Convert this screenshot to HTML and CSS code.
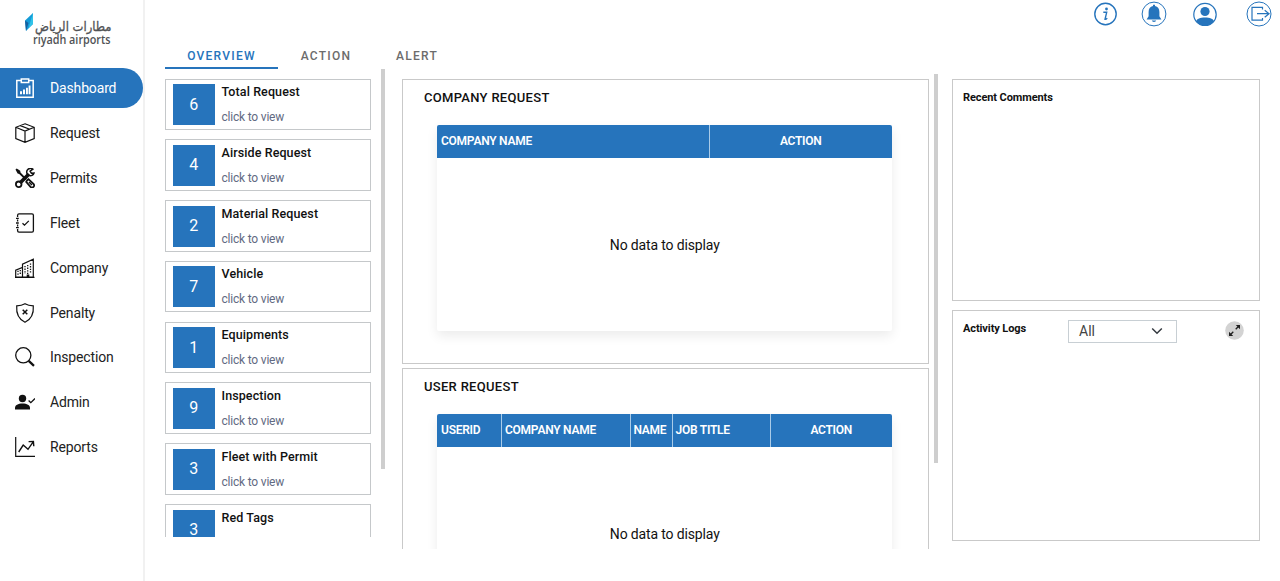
FILE: index.html
```html
<!DOCTYPE html>
<html lang="en">
<head>
<meta charset="utf-8">
<title>Riyadh Airports Dashboard</title>
<link rel="stylesheet" href="styles.css">
</head>
<body>
<div class="app">
  <aside class="sidebar">
    <div class="logo">
      <svg class="logo-mark" width="9" height="19" viewBox="0 0 9 19"><path d="M0 7.500 8 0v11L1 18z" fill="#159bd7"/><path d="M8 0v11L3.500 15z" fill="#31c3e8"/><path d="M0 7.500 3.500 10 1 18z" fill="#17609f"/></svg>
      <div class="logo-words">
        <span class="logo-ar" lang="ar" dir="rtl">مطارات الرياض</span>
        <span class="logo-en">riyadh airports</span>
      </div>
    </div>
    <nav class="nav">
      <a class="nav-item active"><svg class="ico" viewBox="0 0 20 20"><path d="M6 2.500H1.800v16.700h16.400V2.500H14M6.300 1h7.400v3.600H6.300z" stroke-width="1.500"/><path d="M5 13.200h2v3H5zM8 11.500h2v4.700H8zM11 9.800h1.900v6.400H11zM13.600 7.500h1.900v8.700h-1.900z" class="solid"/></svg><span>Dashboard</span></a>
      <a class="nav-item"><svg class="ico" viewBox="0 0 20 20"><path d="M10 .8 19.200 4.300v11.200L10 19.300.8 15.500V4.300zM.8 4.300 10 8l9.200-3.700M10 8v11.300M5.300 2.600l9.400 3.700"/></svg><span>Request</span></a>
      <a class="nav-item"><svg class="ico" viewBox="0 0 20 20"><path d="m5 15 9-9" stroke-width="3.800"/><path d="M17.800 1.200A3.700 3.700 0 1 0 19 5l-2.600.2-1.300-2z" stroke-width="1.500"/><circle cx="3.700" cy="16.300" r="2.800" stroke-width="1.800"/><path d="M.5 1.600 1.700.5l3.500 2.300.3 1.800 6.200 6.200-1.300 1.300-6.200-6.200-1.600-.4z" class="solid" /><path d="m12 12.500 1.500-1.300 5 4.700a2 2 0 0 1-3 3l-4.300-5z" stroke-width="1.800"/><path d="m14 14 3 3" stroke-width="1.500"/></svg><span>Permits</span></a>
      <a class="nav-item"><svg class="ico" viewBox="0 0 20 20"><path d="M2.600 4V2.200A1.400 1.400 0 0 1 4 .9h13a1.400 1.400 0 0 1 1.400 1.400v15.400A1.400 1.400 0 0 1 17 19.100H4a1.400 1.400 0 0 1-1.400-1.400V16M2.600 6.500v2M2.600 11.500v2M1 5.300h2.800M1 10h2.800M1 14.700h2.800M7.500 10.200l2 2 4.300-4.300" stroke-width="1.300"/></svg><span>Fleet</span></a>
      <a class="nav-item"><svg class="ico" viewBox="0 0 20 20"><path d="M.7 19.200v-7L7.500 9.500v9.700zM7.500 19.200V6.200l10.800-5v18zM0 19.300h19.500" stroke-width="1.200"/><path d="M10 8v8M12.700 7v9M15.500 5.500V16M3 12.800v4M5.300 12v5" stroke-dasharray="1.300 1.300" stroke-width="1.300"/><path d="M11.700 16.500h2.600v2.700h-2.600z" class="solid"/></svg><span>Company</span></a>
      <a class="nav-item"><svg class="ico" viewBox="0 0 20 20"><path d="M10 .8c2.700 1.600 5.400 2 8.300 2 .6 8-2 13.500-8.300 16.500C3.700 16.300 1.100 10.800 1.700 2.800c2.900 0 5.600-.4 8.300-2z"/><path d="m7.700 6.700 4.600 4.600m0-4.600-4.600 4.600" stroke-width="1.500"/></svg><span>Penalty</span></a>
      <a class="nav-item"><svg class="ico" viewBox="0 0 20 20"><circle cx="8.300" cy="8.300" r="7.600" stroke-width="1.300"/><path d="m13.700 13.900 5.300 4.900" stroke-width="2.300"/></svg><span>Inspection</span></a>
      <a class="nav-item"><svg class="ico" viewBox="0 0 20 20"><circle cx="7.500" cy="6.500" r="3.700" class="solid"/><path d="M0 17.600v-1.500c0-3 3-4.500 7.500-4.500s7.500 1.500 7.500 4.500v1.500z" class="solid"/><path d="m13.600 8.500 2.200 2.200L20 6.500" stroke-width="1.300"/></svg><span>Admin</span></a>
      <a class="nav-item"><svg class="ico" viewBox="0 0 20 20"><path d="M.7 0v19.300H20"/><path d="m3.700 15 4.500-7 4.800 4.300 5.200-7.500M13.600 4.600l4.800-.2.400 4.900" stroke-width="1.400"/></svg><span>Reports</span></a>
    </nav>
  </aside>

  <main class="main">
    <header class="topbar">
      <svg width="23" height="24" viewBox="0 0 23 24" class="top-ico"><circle cx="11.500" cy="12" r="10.700" stroke-width="1.400"/><circle cx="12.500" cy="7" r="1.400" class="solid"/><path d="M9.300 10.300h3.400l-1.700 7c.8.200 1.500-.3 2.200-1.200" stroke-width="1.400"/></svg>
      <svg width="26" height="26" viewBox="0 0 26 26" class="top-ico"><circle cx="13" cy="13" r="11.900" stroke-width="1"/><path d="M12 3.700h2v1.200c3 .6 4.400 2.700 4.400 6v4.400l2 3.200H5.600l2-3.200v-4.400c0-3.300 1.400-5.400 4.400-6zM10.800 19.600h4.400c-.2 1.800-4.200 1.800-4.400 0z" class="solid"/></svg>
      <svg width="24" height="24" viewBox="0 0 24 24" class="top-ico"><circle cx="12" cy="12.500" r="11.200" stroke-width="1.200"/><circle cx="12" cy="9.500" r="4.600" class="solid"/><path d="M3 19.500c1-3 4-4 9-4s8 1 9 4c-4.500 5.300-13.500 5.300-18 0z" class="solid"/></svg>
      <svg width="26" height="26" viewBox="0 0 26 26" class="top-ico"><circle cx="13" cy="13" r="12" stroke-width="1"/><path d="M16.500 8.500V6.300H6v12.900h10.500V17M11 12.700h12.500M18.700 9.200l4.300 3.500-4.300 3.500" stroke-width="1.200"/></svg>
    </header>

    <div class="tabs">
      <button class="tab selected">OVERVIEW</button>
      <button class="tab">ACTION</button>
      <button class="tab">ALERT</button>
    </div>

    <div class="content">
      <section class="stats">
        <div class="stat-list">
          <article class="stat"><b class="count">6</b><div class="stat-text"><h3>Total Request</h3><a>click to view</a></div></article>
          <article class="stat"><b class="count">4</b><div class="stat-text"><h3>Airside Request</h3><a>click to view</a></div></article>
          <article class="stat"><b class="count">2</b><div class="stat-text"><h3>Material Request</h3><a>click to view</a></div></article>
          <article class="stat"><b class="count">7</b><div class="stat-text"><h3>Vehicle</h3><a>click to view</a></div></article>
          <article class="stat"><b class="count">1</b><div class="stat-text"><h3>Equipments</h3><a>click to view</a></div></article>
          <article class="stat"><b class="count">9</b><div class="stat-text"><h3>Inspection</h3><a>click to view</a></div></article>
          <article class="stat"><b class="count">3</b><div class="stat-text"><h3>Fleet with Permit</h3><a>click to view</a></div></article>
          <article class="stat"><b class="count">3</b><div class="stat-text"><h3>Red Tags</h3></div></article>
        </div>
        <div class="thumb thumb-stats"></div>
      </section>

      <section class="requests">
        <div class="request-list">
          <article class="panel">
            <h2>COMPANY REQUEST</h2>
            <div class="grid">
              <div class="grid-head company-cols"><span>COMPANY NAME</span><span class="mid">ACTION</span></div>
              <div class="grid-empty">No data to display</div>
            </div>
          </article>
          <article class="panel">
            <h2>USER REQUEST</h2>
            <div class="grid">
              <div class="grid-head user-cols"><span>USERID</span><span>COMPANY NAME</span><span>NAME</span><span>JOB TITLE</span><span class="mid">ACTION</span></div>
              <div class="grid-empty">No data to display</div>
            </div>
          </article>
        </div>
        <div class="thumb thumb-requests"></div>
      </section>

      <section class="side">
        <article class="box comments"><h4>Recent Comments</h4></article>
        <article class="box logs">
          <h4>Activity Logs</h4>
          <div class="select"><span>All</span><svg width="12" height="8" viewBox="0 0 12 8"><path d="m1.200 1.500 4.800 4.700 4.800-4.700" fill="none" stroke="#343a40" stroke-width="1.500"/></svg></div>
          <svg class="expand" width="19" height="19" viewBox="0 0 19 19"><circle cx="9.500" cy="9.500" r="9.300" fill="#d3d3d3"/><path d="m10.700 8.300 3-3M8.300 10.700l-3 3" fill="none" stroke="#222" stroke-width="1.300"/><path d="M10.800 4h4.200v4.200zM4 10.800v4.200h4.200z" fill="#222"/></svg>
        </article>
      </section>
    </div>
  </main>
</div>
</body>
</html>
```
FILE: styles.css
```css
* { box-sizing: border-box; }
body { margin: 0; font-family: Roboto, "Liberation Sans", sans-serif; background: #fff; color: #111; }
h2, h3, h4 { margin: 0; }
.app { display: flex; width: 1280px; height: 581px; overflow: hidden; }

.sidebar { width: 145px; flex: none; border-right: 2px solid #f1f1f1; }
.logo { height: 68.300px; padding: 13px 0 0 25px; display: flex; }
.logo-mark { flex: none; }
.logo-words { display: flex; flex-direction: column; align-items: flex-start; width: 78px; margin-left: -1px; padding-top: 5px; color: #505255; white-space: nowrap; }
.logo-ar { font: 400 13px/17px "DejaVu Sans", sans-serif; -webkit-text-stroke: .3px #505255; transform: scaleX(.89); transform-origin: 0 50%; margin-left: 2px; }
.logo-en { font: 600 12px/10px "Open Sans", sans-serif; transform: scaleX(.9); transform-origin: 0 50%; }

.nav { display: flex; flex-direction: column; gap: 4.850px; }
.nav-item { display: flex; align-items: center; gap: 15px; height: 40px; padding-left: 15px; font-size: 14px; letter-spacing: -.15px; color: #222; }
.nav-item.active { background: #2674bc; color: #fff; border-radius: 0 20px 20px 0; }
.ico { width: 20px; height: 20px; fill: none; stroke: #111; stroke-width: 1.200; color: #111; }
.active .ico { stroke: #fff; color: #fff; }
.ico .solid { fill: currentColor; stroke: none; }

.main { flex: 1; display: flex; flex-direction: column; padding-left: 20px; min-width: 0; }
.topbar { height: 28px; flex: none; display: flex; justify-content: flex-end; align-items: center; padding-right: 8.500px; }
.top-ico { fill: none; stroke: #2674bc; }
.top-ico + .top-ico { margin-left: 24px; }
.top-ico:nth-child(3) { margin-left: 26px; }
.top-ico:nth-child(4) { margin-left: 28.500px; }
.top-ico .solid { fill: #2674bc; stroke: none; }

.tabs { display: flex; height: 41px; flex: none; padding-top: 13px; }
.tab { border: 0; border-bottom: 2px solid transparent; background: none; padding: 5px 0 0; width: 113px; font: 500 12px/15px Roboto, sans-serif; letter-spacing: 1.250px; color: #6c6c6c; }
.tab:nth-child(2) { width: 96px; }
.tab:nth-child(3) { width: 86px; }
.tab.selected { color: #2674bc; border-color: #2674bc; }

.content { display: flex; align-items: flex-start; flex: 1; min-height: 0; }
.stats { display: flex; width: 220px; height: 468px; overflow: hidden; }
.stat-list { display: flex; flex-direction: column; gap: 9.300px; width: 206px; padding-top: 9.500px; flex: none; }
.stat { display: flex; flex: none; height: 51.500px; border: 1px solid #c5c8ca; padding: 4.500px 6.500px; }
.count { display: flex; justify-content: center; align-items: center; width: 42.500px; height: 41px; background: #2674bc; color: #fff; font-size: 16px; line-height: 18px; font-weight: 400; }
.stat-text { display: flex; flex-direction: column; gap: 9px; padding-left: 6.500px; white-space: nowrap; }
.stat-text h3 { font-weight: 500; font-size: 12.500px; line-height: 16px; letter-spacing: .1px; }
.stat-text a { font-size: 12px; line-height: 16px; letter-spacing: -.2px; color: #626a82; }

.thumb { width: 4px; background: #cecece; flex: none; }
.thumb-stats { height: 400px; margin-left: 10px; }
.requests { display: flex; width: 536px; height: 475px; margin: 5px 0 0 17px; overflow: hidden; }
.request-list { display: flex; flex-direction: column; gap: 4px; width: 527px; flex: none; padding-top: 5px; }
.thumb-requests { height: 389px; margin-left: 4.500px; }
.panel { flex: none; height: 285px; border: 1px solid #c9c9c9; padding: 10px 36.500px 0 34px; }
.panel h2 { margin: 0 0 19px -13px; font-size: 13px; line-height: 16px; letter-spacing: .3px; font-weight: 500; }
.grid { height: 206px; border-radius: 2px; overflow: visible; box-shadow: 0 5px 12px rgba(0,0,0,.08); }
.grid-head { display: grid; height: 32.500px; background: #2674bc; border-radius: 2px 2px 0 0; color: #fff; font-size: 12px; letter-spacing: -.25px; font-weight: 600; line-height: 32px; white-space: nowrap; }
.company-cols { grid-template-columns: 272px 1fr; }
.user-cols { grid-template-columns: 64px 128.500px 42px 98.500px 1fr; }
.grid-head span { padding-left: 4px; }
.grid-head span + span { border-left: 1px solid #a9cbe8; padding-left: 3px; }
.grid-head .mid { text-align: center; padding: 0; }
.grid-empty { height: 173px; line-height: 174px; text-align: center; font-size: 14px; letter-spacing: -.15px; padding-left: 1px; }

.side { display: flex; flex-direction: column; gap: 9px; width: 308px; margin: 10px 0 0 14px; }
.box { border: 1px solid #c9c9c9; padding: 9px 10px; }
.box h4 { font-size: 11px; letter-spacing: -.1px; font-weight: 700; line-height: 17px; }
.comments { height: 222px; }
.logs { height: 231px; display: flex; align-items: flex-start; }
.logs h4 { width: 105px; }
.select { display: flex; align-items: center; justify-content: space-between; width: 109px; height: 23px; border: 1px solid #c8cfd4; padding: 0 13px 2px 10px; font-size: 14px; color: #444; }
.expand { margin: 1px 5px 0 auto; }
```
